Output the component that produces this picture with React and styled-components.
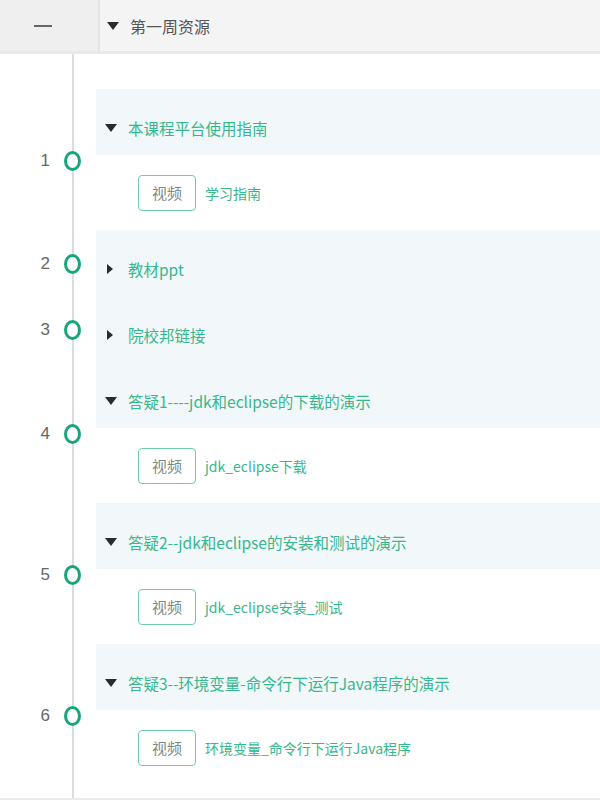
import React from 'react';
import styled, { createGlobalStyle } from 'styled-components';

const GlobalStyle = createGlobalStyle`
  html, body {
    margin: 0;
    padding: 0;
    background: #fff;
  }
  body {
    font-family: "Noto Sans CJK SC", "Noto Sans", sans-serif;
  }
`;

const Page = styled.div`
  width: 600px;
  height: 800px;
  display: flex;
  flex-direction: column;
  overflow: hidden;
`;

const TopBar = styled.div`
  height: 51px;
  flex-shrink: 0;
  display: flex;
  background: #f4f4f4;
  border-bottom: 3px solid #e9e9e9;
`;

const CollapseCell = styled.div`
  width: 100px;
  display: flex;
  align-items: center;
  padding-left: 34px;
  box-sizing: border-box;
  background: #efefef;
  border-right: 2px solid #e3e3e3;
`;

const Dash = styled.span`
  width: 18px;
  height: 2px;
  background: #666;
`;

const TopTitle = styled.div`
  display: flex;
  align-items: center;
  padding-left: 7px;
  font-size: 16px;
  color: #555;
`;

const Caret = styled.span`
  width: 0;
  height: 0;
  flex-shrink: 0;
  margin-right: ${(p) => (p.$gap ? p.$gap : 11)}px;
  ${(p) =>
    p.$open
      ? `
    border-left: 6px solid transparent;
    border-right: 6px solid transparent;
    border-top: 8px solid #2b2b2b;
  `
      : `
    margin-left: 2px;
    margin-right: ${(p.$gap ? p.$gap : 11) + 4}px;
    border-top: 5px solid transparent;
    border-bottom: 5px solid transparent;
    border-left: 6px solid #2b2b2b;
  `}
`;

const Body = styled.div`
  flex: 1;
  padding-top: 35px;
  box-sizing: border-box;
  border-bottom: 2px solid #ebebeb;
  background-image: linear-gradient(
    to right,
    transparent 72px,
    #dcdcdc 72px,
    #dcdcdc 74px,
    transparent 74px
  );
`;

const Row = styled.div`
  display: flex;
`;

const Gutter = styled.div`
  width: 96px;
  flex-shrink: 0;
  display: flex;
  align-items: center;
  padding-top: 2px;
  box-sizing: border-box;
`;

const Num = styled.span`
  width: 50px;
  text-align: right;
  font-family: "Liberation Sans", sans-serif;
  font-size: 17px;
  color: #666;
  margin-right: 14px;
`;

const Node = styled.span`
  width: 17px;
  height: 20px;
  box-sizing: border-box;
  border: 3px solid #17a67c;
  border-radius: 50%;
  background: #fff;
`;

const Section = styled.div`
  flex: 1;
  display: flex;
  flex-direction: column;
`;

const SectionHead = styled.div`
  height: 66px;
  box-sizing: border-box;
  padding: 11px 0 0 9px;
  display: flex;
  align-items: center;
  background: #f2f7f9;
  font-size: 15.5px;
  color: #35b88c;
  white-space: nowrap;
`;

const Item = styled.div`
  height: 75px;
  display: flex;
  align-items: center;
  padding-left: 42px;
`;

const Tag = styled.span`
  width: 58px;
  height: 36px;
  box-sizing: border-box;
  display: flex;
  align-items: center;
  justify-content: center;
  border: 1px solid #6ccdaa;
  border-radius: 4px;
  font-size: 15px;
  color: #7d8a86;
  margin-right: 9px;
`;

const ItemTitle = styled.span`
  font-size: 14px;
  color: #35b88c;
`;

const sections = [
  { title: '本课程平台使用指南', item: '学习指南' },
  { title: '教材ppt' },
  { title: '院校邦链接' },
  { title: '答疑1----jdk和eclipse的下载的演示', item: 'jdk_eclipse下载' },
  { title: '答疑2--jdk和eclipse的安装和测试的演示', item: 'jdk_eclipse安装_测试' },
  { title: '答疑3--环境变量-命令行下运行Java程序的演示', item: '环境变量_命令行下运行Java程序' },
];

const App = () => (
  <Page>
    <GlobalStyle />
    <TopBar>
      <CollapseCell>
        <Dash />
      </CollapseCell>
      <TopTitle>
        <Caret $open $gap={11} />
        第一周资源
      </TopTitle>
    </TopBar>
    <Body>
      {sections.map((s, i) => (
        <Row key={s.title}>
          <Gutter>
            <Num>{i + 1}</Num>
            <Node />
          </Gutter>
          <Section>
            <SectionHead>
              <Caret $open={!!s.item} />
              {s.title}
            </SectionHead>
            {s.item && (
              <Item>
                <Tag>视频</Tag>
                <ItemTitle>{s.item}</ItemTitle>
              </Item>
            )}
          </Section>
        </Row>
      ))}
    </Body>
  </Page>
);

export default App;
